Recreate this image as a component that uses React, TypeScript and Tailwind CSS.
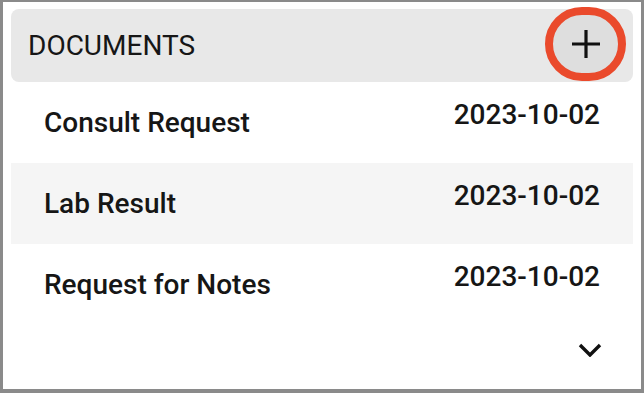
import { useState } from "react";

type Doc = { name: string; date: string };

const docs: Doc[] = [
  { name: "Consult Request", date: "2023-10-02" },
  { name: "Lab Result", date: "2023-10-02" },
  { name: "Request for Notes", date: "2023-10-02" },
];

function PlusIcon() {
  return (
    <svg viewBox="0 0 30 30" className="h-[30px] w-[30px]">
      <path d="M15 1v28M1 15h28" stroke="#111" strokeWidth="3.2" />
    </svg>
  );
}

function ChevronIcon() {
  return (
    <svg viewBox="0 0 24 14" className="h-[14px] w-[24px]">
      <path d="M2 2l10 10 10-10" fill="none" stroke="#111" strokeWidth="3.4" />
    </svg>
  );
}

export default function App() {
  const [open, setOpen] = useState(false);

  return (
    <div
      className="h-[393px] w-[644px] overflow-hidden border-t-2 border-r-[3px] border-b-4 border-l-[3px] border-[#8a8a8a] bg-white px-[8px] pt-[7px] text-[#161616]"
      style={{ fontFamily: "Roboto, 'Liberation Sans', sans-serif" }}
    >
      {/* header bar */}
      <div className="flex h-[73px] items-center justify-between rounded-[8px] bg-[#e8e8e8] pl-[17px] pr-[7px]">
        <span className="text-[28px] leading-none">DOCUMENTS</span>
        <button
          type="button"
          className="-mt-[3px] flex h-[74px] w-[81px] items-center justify-center rounded-full border-[8px] border-[#ea4a2c] bg-[#dedede]"
        >
          <PlusIcon />
        </button>
      </div>

      {/* document rows */}
      <div className="flex flex-col">
        {docs.map((d, i) => (
          <div
            key={d.name}
            className={
              "flex h-[81px] justify-between px-[33px] " +
              (i % 2 === 1 ? "bg-[#f5f5f5]" : "bg-white")
            }
          >
            <span className="self-center text-[28px] font-medium leading-none">{d.name}</span>
            <span className="pt-[19px] text-[28px] font-medium leading-none">{d.date}</span>
          </div>
        ))}
      </div>

      <div className="flex justify-end pr-[31px] pt-[18px]">
        <button type="button" onClick={() => setOpen(!open)} className="flex">
          <ChevronIcon />
        </button>
      </div>
    </div>
  );
}
